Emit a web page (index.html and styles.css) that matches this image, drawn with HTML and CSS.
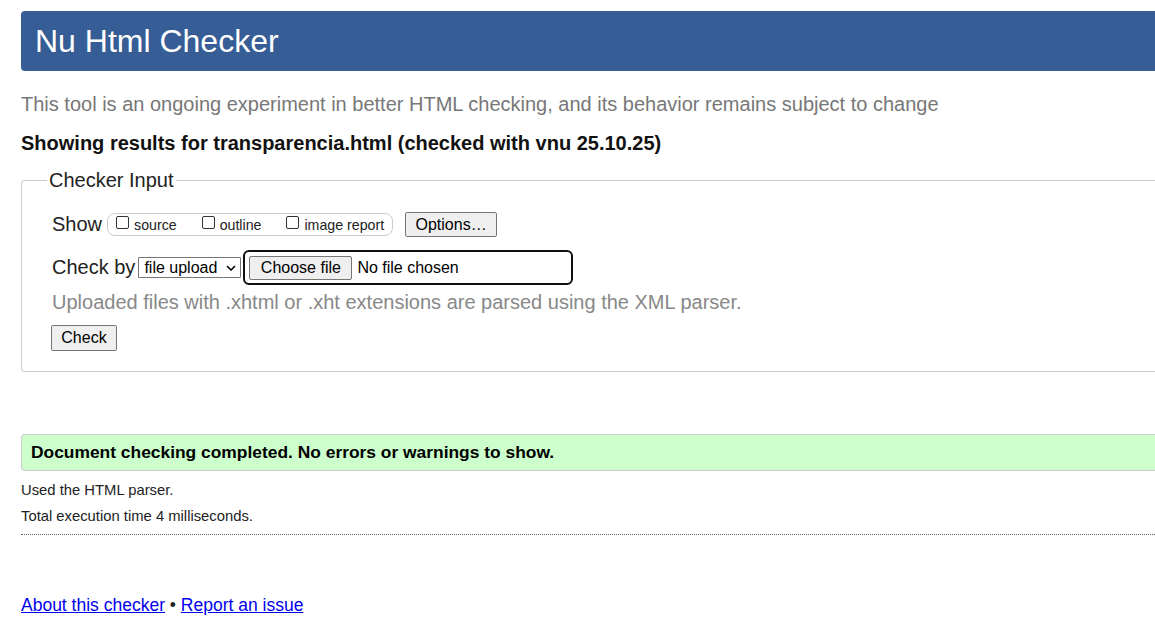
FILE: index.html
```html
<!DOCTYPE html>
<html lang="en">
<head>
<meta charset="utf-8">
<title>Nu Html Checker</title>
<link rel="stylesheet" href="styles.css">
</head>
<body>
<div class="page">
  <h1 class="banner">Nu Html Checker</h1>
  <p class="intro">This tool is an ongoing experiment in better HTML checking, and its behavior remains subject to change</p>
  <p class="showing">Showing results for transparencia.html (checked with vnu 25.10.25)</p>
  <fieldset class="input-box">
    <legend>Checker Input</legend>
    <div class="row show-row">
      <span class="row-label">Show</span>
      <span class="toggles">
        <label class="toggle"><span class="cb"></span>source</label>
        <label class="toggle"><span class="cb"></span>outline</label>
        <label class="toggle last"><span class="cb"></span>image report</label>
      </span>
      <button class="btn options">Options…</button>
    </div>
    <div class="row check-row">
      <span class="row-label">Check by</span>
      <span class="select">file upload<svg class="chev" viewBox="0 0 10 6" width="10" height="6"><path d="M1 1l4 4 4-4" fill="none" stroke="#000" stroke-width="1.6"/></svg></span>
      <span class="file">
        <span class="btn choose">Choose file</span>
        <span class="nofile">No file chosen</span>
      </span>
    </div>
    <p class="hint">Uploaded files with .xhtml or .xht extensions are parsed using the XML parser.</p>
    <button class="btn check">Check</button>
  </fieldset>
  <div class="success">Document checking completed. No errors or warnings to show.</div>
  <p class="meta">Used the HTML parser.</p>
  <p class="meta">Total execution time 4 milliseconds.</p>
  <hr class="dotted">
  <p class="footer"><a href="#">About this checker</a> • <a href="#">Report an issue</a></p>
</div>
</body>
</html>
```
FILE: styles.css
```css
html, body {
  margin: 0;
  padding: 0;
  overflow: hidden;
  background: #fff;
}
body {
  font-family: "Liberation Sans", Arial, sans-serif;
  color: #000;
}
.page {
  padding: 11px 0 0 21px;
  width: 1200px;
}
.banner {
  margin: 0;
  height: 60px;
  line-height: 60px;
  padding-left: 14px;
  background: #365d95;
  color: #fff;
  font-weight: normal;
  font-size: 32px;
  border-radius: 4px 0 0 4px;
}
.intro {
  margin: 22px 0 0;
  font-size: 20px;
  line-height: 23px;
  color: #777;
}
.showing {
  margin: 16px 0 0;
  font-size: 20px;
  line-height: 23px;
  font-weight: bold;
  color: #111;
}
.input-box {
  margin: 14px 0 0;
  padding: 20px 0 20px 30px;
  border: 1px solid #ccc;
  border-right: none;
  border-radius: 4px 0 0 4px;
}
.input-box legend {
  font-size: 20px;
  padding: 0 2px;
  margin-left: -5px;
  color: #222;
}
.row {
  display: flex;
  align-items: center;
}
.row-label {
  font-size: 20px;
  color: #222;
}
.show-row .row-label { margin-right: 5px; }
.toggles {
  display: flex;
  align-items: center;
  height: 21px;
  border: 1px solid #ccc;
  border-radius: 8px;
  padding: 0 8px 0 8px;
  font-size: 14.2px;
  color: #222;
}
.toggle {
  display: flex;
  align-items: center;
  margin-right: 25px;
}
.toggle.last { margin-right: 0; }
.cb {
  display: inline-block;
  width: 11px;
  height: 11px;
  border: 1px solid #333;
  border-radius: 2px;
  margin: 0 5px 5px 0;
}
.btn {
  font-family: "Liberation Sans", Arial, sans-serif;
  font-size: 16px;
  background: #efefef;
  border: 1px solid #767676;
  border-radius: 2px;
  color: #000;
  box-sizing: border-box;
  display: inline-flex;
  align-items: center;
  justify-content: center;
  padding: 0;
}
.options {
  width: 92px;
  height: 25px;
  margin-left: 12px;
}
.check-row {
  margin-top: 13px;
}
.check-row .row-label { margin-right: 3px; }
.select {
  display: inline-flex;
  align-items: center;
  box-sizing: border-box;
  width: 103px;
  height: 21px;
  border: 1px solid #767676;
  border-radius: 1px;
  padding: 0 4px 0 5px;
  font-size: 16px;
  justify-content: space-between;
}
.chev { margin-top: 1px; }
.file {
  display: inline-flex;
  align-items: center;
  box-sizing: border-box;
  width: 330px;
  height: 35px;
  margin-left: 2px;
  border: 2px solid #101010;
  border-radius: 6px;
  padding-left: 4px;
}
.choose {
  width: 103px;
  height: 24px;
}
.nofile {
  font-size: 16px;
  margin-left: 5px;
}
.hint {
  margin: 5px 0 0;
  font-size: 20px;
  line-height: 24px;
  color: #888;
}
.check {
  margin-top: 11px;
  width: 66px;
  height: 26px;
  margin-left: -1px;
}
.success {
  margin-top: 62px;
  box-sizing: border-box;
  height: 37px;
  line-height: 35px;
  padding-left: 9px;
  background: #ccffcc;
  border: 1px solid #ccc;
  border-right: none;
  border-radius: 4px 0 0 4px;
  font-size: 17.4px;
  font-weight: bold;
}
.meta {
  margin: 0;
  font-size: 14.8px;
  line-height: 17px;
  color: #222;
}
.success + .meta { margin-top: 11px; }
.meta + .meta { margin-top: 9px; }
.dotted {
  margin: 9px 0 0;
  border: none;
  border-top: 1px dotted #666;
  height: 0;
}
.footer {
  margin: 60px 0 0;
  font-size: 17.5px;
  color: #222;
}
.footer a { color: #00e; }
```
